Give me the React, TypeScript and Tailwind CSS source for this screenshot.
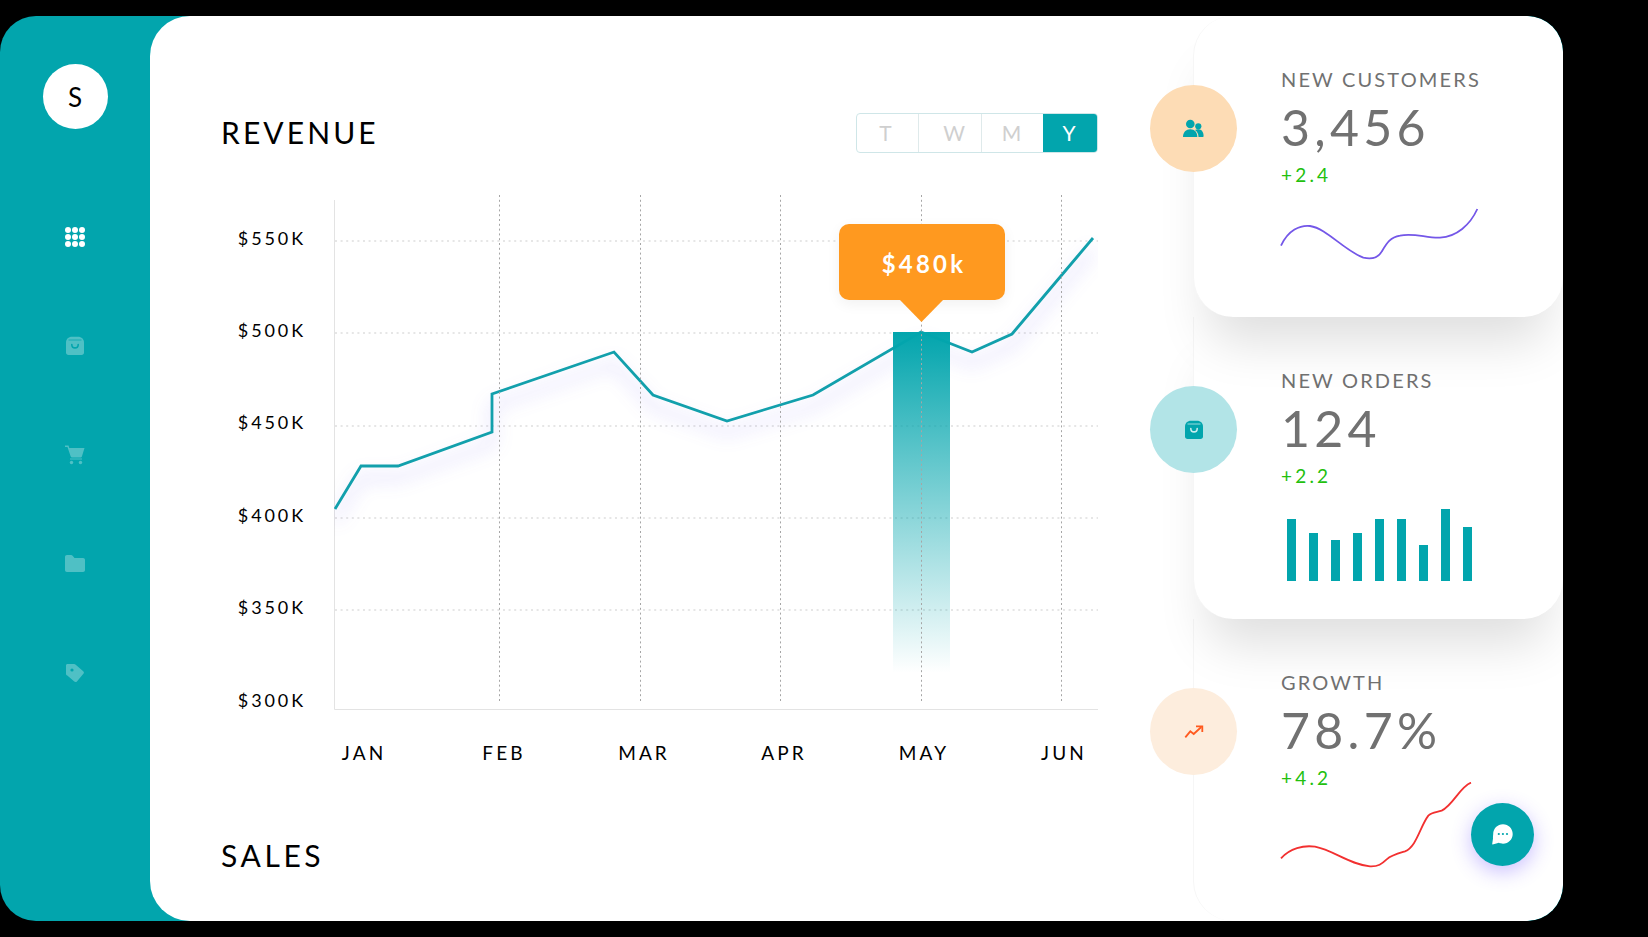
import React from "react";

const TEAL = "#02A5AD";

function GridIcon() {
  const cells = [3, 10, 17];
  return (
    <svg width="20" height="20" viewBox="0 0 20 20" fill="#fff">
      {cells.map((y) => cells.map((x) => <circle key={`${x}-${y}`} cx={x} cy={y} r="3" />))}
    </svg>
  );
}

function BagIcon({ fill, cut }: { fill: string; cut: string }) {
  return (
    <svg width="20" height="20" viewBox="0 0 20 20">
      <path d="M1 6.5C1 3 3.5 .7 7 .7h6c3.500 0 6 2.300 6 5.800v10c0 1.500-1 2.500-2.500 2.500h-13C2 19 1 18 1 16.500z" fill={fill} />
      <path d="M3.500 4h13" stroke={cut} strokeOpacity="0.75" strokeWidth="1" fill="none" />
      <path d="M6.800 8.500c0 4.500 6.400 4.500 6.400 0" stroke={cut} strokeWidth="1.600" fill="none" strokeLinecap="round" />
    </svg>
  );
}

function CartIcon() {
  return (
    <svg width="20" height="20" viewBox="0 0 20 20" fill="#fff">
      <path d="M0 .5h3.500l.8 2.500H19.500l-2.600 8.500c-.2.600-.6 1-1.300 1H7c-.6 0-1.100-.4-1.300-1L2.500 2H0z" />
      <rect x="5" y="13.500" width="12" height="1" />
      <circle cx="6.500" cy="17.500" r="1.700" />
      <circle cx="15.500" cy="17.500" r="1.700" />
    </svg>
  );
}

function FolderIcon() {
  return (
    <svg width="20" height="17" viewBox="0 0 20 17" fill="#fff">
      <path d="M0 2C0 .8.800 0 2 0h4c.7 0 1.200.3 1.600.8L9.500 3H18c1.200 0 2 .8 2 2v10c0 1.200-.8 2-2 2H2c-1.200 0-2-.8-2-2z" />
    </svg>
  );
}

function TagIcon() {
  return (
    <svg width="20" height="20" viewBox="0 0 20 20">
      <path d="M1 2.500C1 1.500 1.700 1 2.600 1H9c.7 0 1.200.2 1.700.7l7.500 6.500c.9.800.9 1.800.2 2.600l-6.500 7.600c-.7.800-1.800.8-2.600.2l-7-6C1.300 12 1 11.400 1 10.700z" fill="#fff" />
      <circle cx="7" cy="7" r="1.600" fill={TEAL} />
    </svg>
  );
}

function UsersIcon() {
  return (
    <svg width="21" height="19" viewBox="0 0 21 19" fill={TEAL}>
      <circle cx="7.300" cy="5" r="4.300" />
      <circle cx="15.300" cy="7.300" r="3.100" />
      <path d="M0 18c0-5 3-7.800 7.300-7.800s7 2.800 7 7.800z" />
      <path d="M12 11c1-.6 2-.8 3.300-.8 3.400 0 5.300 2.800 5.300 6.800 0 .6-.4 1-1 1H15.500c0-3-1.300-5.500-3.500-7z" />
    </svg>
  );
}

function TrendIcon() {
  return (
    <svg width="20" height="14" viewBox="0 0 20 14" fill="none" stroke="#FF5A1F" strokeWidth="1.800">
      <path d="M1.300 12.300 6.300 6.300 9.700 9 17.300 2" />
      <path d="M12 1.300h6.300V7" />
    </svg>
  );
}

function ChatIcon() {
  return (
    <svg width="21" height="21" viewBox="0 0 21 21">
      <path d="M11 .3C16.500.3 20.700 4.600 20.700 10S16.500 19.700 11 19.700c-1.600 0-2.800-.2-4.100-.9L.6 20.400c-.3 0-.5-.2-.4-.5L1 14.500C.8 13 1.200 10.500 1.200 10 1.200 4.600 5.500.3 11 .3z" fill="#fff" />
      <circle cx="6.800" cy="10" r="1.100" fill={TEAL} />
      <circle cx="10.900" cy="10" r="1.100" fill={TEAL} />
      <circle cx="15" cy="10" r="1.100" fill={TEAL} />
    </svg>
  );
}

function Sidebar() {
  return (
    <aside className="w-[150px] shrink-0 flex flex-col items-center pt-[48px]">
      <div className="w-[65px] h-[65px] rounded-full bg-white flex items-center justify-center pt-[2px] text-black text-[26px] font-['Lato',sans-serif]">
        S
      </div>
      <div className="mt-[98px] flex flex-col items-center">
        <div className="h-[109px] flex items-start"><GridIcon /></div>
        <div className="h-[109px] flex items-start opacity-30"><BagIcon fill="#fff" cut={TEAL} /></div>
        <div className="h-[109px] flex items-start opacity-30"><CartIcon /></div>
        <div className="h-[109px] flex items-start pt-[1px] opacity-30"><FolderIcon /></div>
        <div className="h-[109px] flex items-start opacity-30"><TagIcon /></div>
      </div>
    </aside>
  );
}

const SEGMENTS = [
  { label: "T", cls: "w-[62px] pr-[4px] border-r border-[#dfeaeb]" },
  { label: "W", cls: "w-[63px] pl-[8px] border-r border-[#dfeaeb]" },
  { label: "M", cls: "w-[61px] pr-[2px]" },
];

function Toggle() {
  return (
    <div className="flex h-[40px] w-[242px] rounded-[4px] border border-[#cfe6e8] text-[21px] text-[#cfcfcf] font-['Lato',sans-serif] overflow-hidden">
      {SEGMENTS.map((s) => (
        <div key={s.label} className={`${s.cls} flex items-center justify-center`}>{s.label}</div>
      ))}
      <div className="flex-1 bg-[#02A5AD] text-white flex items-center justify-center pr-[2px]">Y</div>
    </div>
  );
}

const LINE = [
  [335, 509], [361, 466], [398, 466], [492, 432], [492, 394], [614, 352], [653, 395],
  [727, 421], [813, 395], [921, 332], [972, 352], [1012, 334], [1093, 238],
].map((p) => p.join(",")).join(" ");

const H_LINES = [241, 333, 426, 518, 610];
const V_LINES = [499.5, 640.5, 780.5, 921.5, 1061.5];

function Chart() {
  return (
    <div className="relative">
      <svg width="764" height="522" viewBox="334 190 764 522" className="block">
        <defs>
          <linearGradient id="barFade" x1="0" y1="0" x2="0" y2="1">
            <stop offset="0" stopColor={TEAL} />
            <stop offset="1" stopColor={TEAL} stopOpacity="0" />
          </linearGradient>
        </defs>
        <path d="M334.500 200V709.500H1098" fill="none" stroke="#e3e3e3" strokeWidth="1" />
        {H_LINES.map((y) => (
          <line key={y} x1="335" x2="1098" y1={y} y2={y} stroke="#dedede" strokeWidth="1.300" strokeDasharray="2 3.600" />
        ))}
        <polyline points={LINE} fill="none" stroke="#12A0AC" strokeWidth="2.800" strokeLinejoin="miter" className="drop-shadow-[0_12px_9px_rgba(90,70,240,0.38)]" />
        <rect x="893" y="332" width="57" height="341" fill="url(#barFade)" />
        {V_LINES.map((x) => (
          <line key={x} x1={x} x2={x} y1="195" y2="702" stroke="#a6a6a6" strokeWidth="1" strokeDasharray="2 2.800" />
        ))}
      </svg>
      <div className="absolute left-[505px] top-[34px] w-[166px] h-[76px] rounded-[10px] bg-[#FF991F] shadow-[0_4px_14px_rgba(0,0,0,0.06)] flex items-center justify-center pt-[3px] pl-[4px] text-white text-[24px] font-bold tracking-[3.200px] font-['Lato',sans-serif]">
        $480k
        <div className="absolute left-[60px] top-[75px] w-[45px] h-[23px] bg-[#FF991F] [clip-path:polygon(0_0,100%_0,50%_100%)]" />
      </div>
    </div>
  );
}

function Main() {
  return (
    <section className="w-[1043px] shrink-0 pl-[71px] pt-[97px] font-['Lato',sans-serif] text-black">
      <div className="flex items-start justify-between w-[877px] h-[40px]">
        <h1 className="text-[30px] leading-[38px] tracking-[3.100px] font-normal">REVENUE</h1>
        <Toggle />
      </div>
      <div className="mt-[37px] h-[522px] flex">
        <div className="w-[113px] shrink-0 pt-[2px] flex flex-col">
          {["$550K", "$500K", "$450K", "$400K", "$350K", "$300K"].map((t) => (
            <div key={t} className="h-[92.400px] shrink-0 w-[85px] flex items-center justify-end text-[18px] tracking-[2.900px]">{t}</div>
          ))}
        </div>
        <Chart />
      </div>
      <div className="mt-[29px] ml-[73px] grid grid-cols-[repeat(6,140px)] text-[19px] leading-[24px] tracking-[3.100px] text-center">
        {["JAN", "FEB", "MAR", "APR", "MAY", "JUN"].map((m) => <div key={m}>{m}</div>)}
      </div>
      <h2 className="mt-[70px] text-[30px] leading-[40px] tracking-[3.600px] font-normal">SALES</h2>
    </section>
  );
}

function Stat({ title, value, delta, circle, icon, cardCls, children }: {
  title: string; value: string; delta: string; circle: string; icon: React.ReactNode; cardCls: string; children: React.ReactNode;
}) {
  return (
    <div className={`relative pl-[87px] pt-[51px] border-l border-[#f6f6f6] font-['Lato',sans-serif] bg-white ${cardCls}`}>
      <div className={`absolute -left-[44px] top-[69px] w-[87px] h-[87px] rounded-full flex items-center justify-center ${circle}`}>
        {icon}
      </div>
      <div className="text-[20px] leading-[24px] tracking-[2.150px] text-[#717171]">{title}</div>
      <div className="mt-[6px] text-[50px] leading-[60px] tracking-[4.300px] text-[#717171]">{value}</div>
      <div className="mt-[6px] text-[19px] leading-[24px] tracking-[3.200px] text-[#22C00E]">{delta}</div>
      {children}
    </div>
  );
}

function RightColumn() {
  return (
    <div className="flex-1 flex flex-col">
      <Stat
        title="NEW CUSTOMERS" value="3,456" delta="+2.4"
        circle="bg-[#FDDCB5]" icon={<UsersIcon />}
        cardCls="h-[301px] z-30 rounded-tl-[40px] rounded-tr-[36px] rounded-b-[40px] shadow-[0_40px_50px_-15px_rgba(0,0,0,0.13)]"
      >
        <svg width="210" height="57" viewBox="450 558 630 171" className="block mt-[19px] -ml-[1px]">
          <path d="M453 677C475 630 510 615 540 618C590 625 640 690 700 713C730 720 745 712 755 695C770 670 780 652 810 647C850 637 890 655 930 653C980 650 1020 615 1042 567" fill="none" stroke="#7457E8" strokeWidth="5.400" />
        </svg>
      </Stat>
      <Stat
        title="NEW ORDERS" value="124" delta="+2.2"
        circle="bg-[#B2E4E7]" icon={<BagIcon fill={TEAL} cut="#C8ECEE" />}
        cardCls="h-[302px] z-20 rounded-b-[40px] shadow-[0_40px_50px_-15px_rgba(0,0,0,0.13)]"
      >
        <div className="mt-[21px] ml-[6px] h-[72px] flex items-end gap-[13px]">
          {[62, 48, 41, 48, 62, 62, 36, 72, 54].map((h, i) => (
            <div key={i} className="w-[9px] bg-[#02A5AD]" style={{ height: h }} />
          ))}
        </div>
      </Stat>
      <Stat
        title="GROWTH" value="78.7%" delta="+4.2"
        circle="bg-[#FDEDDD]" icon={<TrendIcon />}
        cardCls="h-[302px] z-10 rounded-bl-[40px] rounded-br-[36px]"
      >
        <svg width="210" height="88" viewBox="450 426 630 264" className="block -mt-[8px] -ml-[1px]">
          <path d="M453 655C480 625 520 615 555 620C610 630 660 675 720 679C745 680 755 672 770 658C785 645 805 640 825 634C860 620 870 560 895 527C905 517 920 517 935 512C970 495 990 440 1023 428" fill="none" stroke="#F23030" strokeWidth="5.400" />
        </svg>
        <div className="absolute right-[29px] bottom-[55px] w-[63px] h-[63px] rounded-full bg-[#02A5AD] flex items-center justify-center shadow-[0_6px_20px_rgba(90,60,255,0.32)]">
          <ChatIcon />
        </div>
      </Stat>
    </div>
  );
}

export default function App() {
  return (
    <div className="w-full h-[937px] bg-black pt-[16px] overflow-hidden">
      <div className="w-[1563px] h-[905px] rounded-[36px] bg-[#02A5AD] flex overflow-hidden">
        <Sidebar />
        <main className="flex-1 flex bg-white rounded-[40px] min-w-0">
          <Main />
          <RightColumn />
        </main>
      </div>
    </div>
  );
}
